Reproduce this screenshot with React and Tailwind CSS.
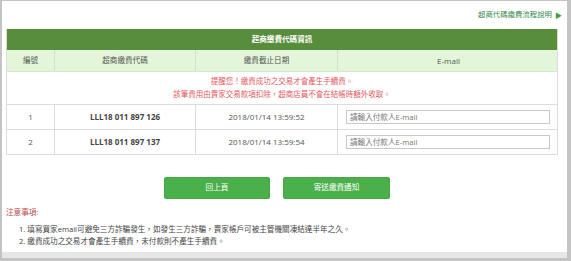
import React from "react";

const font = { fontFamily: '"Open Sans", "Noto Sans CJK TC", sans-serif' };

function Row({ n, code, date }) {
  return (
    <div className="grid grid-cols-[48px_141px_142px_221px] h-[25px] border-b border-[#dcdcdc]">
      <div className="flex items-center justify-center border-r border-[#dcdcdc] text-[#555]">{n}</div>
      <div className="flex items-center justify-center border-r border-[#dcdcdc] font-bold text-[#444]">{code}</div>
      <div className="flex items-center justify-center border-r border-[#dcdcdc] text-[#555]">{date}</div>
      <div className="flex items-center pl-[8px]">
        <input
          className="h-[14px] w-[204px] border border-[#c8c8c8] px-[3px] text-[7.6px] text-[#555] placeholder:text-[#777] outline-none"
          placeholder="請輸入付款人E-mail"
        />
      </div>
    </div>
  );
}

export default function App() {
  return (
    <div className="w-[571px] h-[261px] bg-[#c4c4c4] pl-[2px] pt-[1px] pr-[4px] pb-[3px]" style={font}>
      <div className="flex h-full flex-col bg-white text-[8px] leading-none">
        <div className="flex-1 px-[4px]">
          <div className="flex h-[28px] items-center justify-end pr-[1px] text-[7.4px] text-[#3a8a4a]">
            <span>超商代碼繳費流程說明</span>
            <span className="ml-[3px] text-[7px] text-[#3aa03a]">▶</span>
          </div>
          <div className="w-[552px] border-x border-[#dcdcdc]">
            <div className="flex h-[21px] items-center justify-center bg-[#588d3b] text-[7.6px] font-bold text-white">
              超商繳費代碼資訊
            </div>
            <div className="grid grid-cols-[48px_141px_142px_221px] h-[22px] bg-[#e3f6d9] border-b border-[#d8e6cf] text-[7.6px] text-[#555]">
              <div className="flex items-center justify-center border-r border-[#d2e2c8]">編號</div>
              <div className="flex items-center justify-center border-r border-[#d2e2c8]">超商繳費代碼</div>
              <div className="flex items-center justify-center border-r border-[#d2e2c8]">繳費截止日期</div>
              <div className="flex items-center justify-center text-[8px]">E-mail</div>
            </div>
            <div className="flex h-[33px] flex-col items-center justify-center gap-[5px] border-b border-[#dcdcdc] text-[7.5px] text-[#e5585c]">
              <div>提醒您！繳費成功之交易才會產生手續費。</div>
              <div>該筆費用由賣家交易款項扣除，超商店員不會在結帳時額外收取。</div>
            </div>
            <Row n="1" code="LLL18 011 897 126" date="2018/01/14 13:59:52" />
            <Row n="2" code="LLL18 011 897 137" date="2018/01/14 13:59:54" />
          </div>
          <div className="mt-[22px] flex justify-center gap-[13px] pr-[15px] text-[7.6px]">
            <button className="h-[22px] w-[106px] rounded-[2px] border border-[#45a845] bg-[#4bb04b] text-white">
              回上頁
            </button>
            <button className="h-[22px] w-[107px] rounded-[2px] border border-[#45a845] bg-[#4bb04b] text-white">
              寄送繳費通知
            </button>
          </div>
          <div className="mt-[10px] text-[7.6px] text-[#c0504d]">注意事項:</div>
          <ol className="mt-[6px] pl-[13px] text-[7.6px] leading-[12px] text-[#444]">
            <li>1. 填寫買家email可避免三方詐騙發生，如發生三方詐騙，賣家帳戶可被主管機關凍結達半年之久。</li>
            <li>2. 繳費成功之交易才會產生手續費，未付款則不產生手續費。</li>
          </ol>
        </div>
        <div className="h-[6px] bg-[#e4e6e8]" />
      </div>
    </div>
  );
}
